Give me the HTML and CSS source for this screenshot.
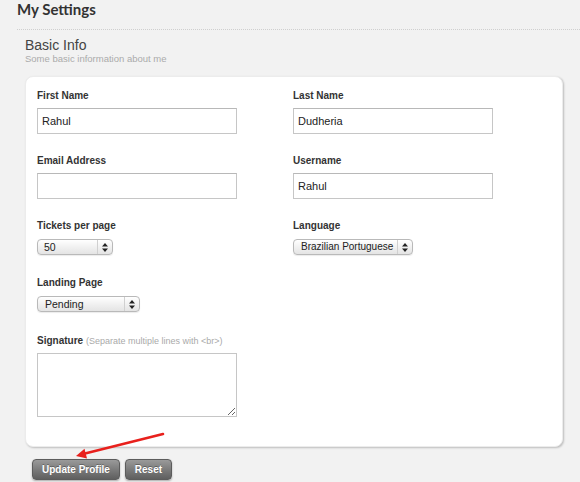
FILE: index.html
```html
<!DOCTYPE html>
<html>
<head>
<meta charset="utf-8">
<link rel="stylesheet" href="styles.css">
</head>
<body>
<div class="page">
  <header class="page-head">
    <h1 class="page-title">My Settings</h1>
  </header>
  <section class="section">
    <h2 class="section-title">Basic Info</h2>
    <p class="section-sub">Some basic information about me</p>
    <div class="card">
      <div class="grid">
        <div class="field">
          <label class="label">First Name</label>
          <input class="input" type="text" value="Rahul">
        </div>
        <div class="field">
          <label class="label">Last Name</label>
          <input class="input" type="text" value="Dudheria">
        </div>
        <div class="field">
          <label class="label">Email Address</label>
          <input class="input" type="text" value="">
        </div>
        <div class="field">
          <label class="label">Username</label>
          <input class="input" type="text" value="Rahul">
        </div>
        <div class="field field-select">
          <label class="label">Tickets per page</label>
          <div class="select select-tickets">
            <span class="select-value">50</span>
            <span class="select-arrows"><svg width="6" height="9" viewBox="0 0 6 9"><path d="M3 0 L6 3.4 H0 Z M3 9 L6 5.6 H0 Z" fill="#222"/></svg></span>
          </div>
        </div>
        <div class="field field-select">
          <label class="label">Language</label>
          <div class="select select-lang">
            <span class="select-value">Brazilian Portuguese</span>
            <span class="select-arrows"><svg width="6" height="9" viewBox="0 0 6 9"><path d="M3 0 L6 3.4 H0 Z M3 9 L6 5.6 H0 Z" fill="#222"/></svg></span>
          </div>
        </div>
        <div class="field field-select full">
          <label class="label">Landing Page</label>
          <div class="select select-landing">
            <span class="select-value">Pending</span>
            <span class="select-arrows"><svg width="6" height="9" viewBox="0 0 6 9"><path d="M3 0 L6 3.4 H0 Z M3 9 L6 5.6 H0 Z" fill="#222"/></svg></span>
          </div>
        </div>
        <div class="field full field-sig">
          <label class="label">Signature <span class="hint">(Separate multiple lines with &lt;br&gt;)</span></label>
          <textarea class="textarea"></textarea>
        </div>
      </div>
    </div>
    <div class="actions">
      <button class="btn">Update Profile</button>
      <button class="btn">Reset</button>
    </div>
  </section>
  <svg class="annotation" width="580" height="482" viewBox="0 0 580 482">
    <line x1="163" y1="434" x2="85" y2="453.5" stroke="#e8201c" stroke-width="2.6" stroke-linecap="round"/>
    <polygon points="76,456 87,458.5 84.5,448.8" fill="#e8201c"/>
  </svg>
</div>
</body>
</html>
```
FILE: styles.css
```css
html, body {
  margin: 0;
  padding: 0;
  background: #f2f2f2;
}
body {
  font-family: "Liberation Sans", Arial, sans-serif;
  color: #333;
}
.page {
  position: relative;
  width: 580px;
  height: 482px;
  overflow: hidden;
}
.page-head {
  margin-left: 17px;
  height: 29px;
  border-bottom: 1px dotted #cfcfcf;
}
.page-title {
  margin: 0;
  font-family: Lato, "Liberation Sans", sans-serif;
  font-weight: 700;
  font-size: 15px;
  line-height: 18px;
  color: #333;
}
.section {
  padding-left: 25px;
}
.section-title {
  margin: 8px 0 0;
  font-weight: normal;
  font-size: 14px;
  line-height: 15px;
  color: #444;
}
.section-sub {
  margin: 0;
  font-size: 9.5px;
  line-height: 12px;
  color: #ababab;
}
.card {
  margin-top: 11px;
  background: #fff;
  border: 1px solid #ececec;
  border-radius: 8px;
  box-shadow: 1px 1px 2px rgba(0,0,0,0.22);
  padding: 13px 0 29px 11px;
  box-sizing: border-box;
  width: 538px;
}
.grid {
  display: grid;
  grid-template-columns: 256px 1fr;
  row-gap: 21px;
}
.field {
  display: flex;
  flex-direction: column;
  align-items: flex-start;
}
.field-select {
  padding-bottom: 1px;
}
.field-sig {
  margin-top: 1px;
}
.full {
  grid-column: 1 / span 2;
}
.label {
  font-weight: bold;
  font-size: 10px;
  line-height: 12px;
  color: #333;
  margin-bottom: 6px;
}
.field-select .label {
  margin-bottom: 7px;
}
.hint {
  font-weight: normal;
  font-size: 9px;
  color: #aaa;
}
.input {
  width: 200px;
  height: 26px;
  box-sizing: border-box;
  margin: 0;
  border: 1px solid #c6c6c6;
  border-top-color: #b8b8b8;
  background: #fff;
  padding: 0 4px;
  font-family: "Liberation Sans", Arial, sans-serif;
  font-size: 11px;
  color: #222;
  outline: none;
}
.select {
  display: flex;
  align-items: center;
  height: 16px;
  box-sizing: border-box;
  border: 1px solid #b9b9b9;
  border-radius: 4px;
  background: linear-gradient(#ffffff, #f1f1f1 50%, #e4e4e4);
  box-shadow: 0 1px 1px rgba(0,0,0,0.08);
}
.select-value {
  flex: 1;
  font-size: 10.5px;
  line-height: 14px;
  color: #222;
  padding-left: 7px;
  white-space: nowrap;
  overflow: hidden;
}
.select-arrows {
  flex: none;
  width: 14px;
  height: 14px;
  display: flex;
  align-items: center;
  justify-content: center;
  border-left: 1px solid #d0d0d0;
}
.select-tickets { width: 76px; }
.select-tickets .select-value { padding-left: 6px; }
.select-lang { width: 120px; }
.select-lang .select-value { font-size: 10px; }
.select-landing { width: 103px; }
.textarea {
  width: 200px;
  height: 64px;
  box-sizing: border-box;
  margin: 0;
  border: 1px solid #c6c6c6;
  background: #fff;
  resize: both;
  outline: none;
}
.actions {
  display: flex;
  gap: 5px;
  margin-top: 12px;
  margin-left: 7px;
}
.btn {
  height: 21px;
  box-sizing: border-box;
  margin: 0;
  padding: 0 9px;
  border: 1px solid #5c5c5c;
  border-radius: 4px;
  background: linear-gradient(#9a9a9a, #7b7b7b 50%, #5f5f5f);
  box-shadow: 0 1px 2px rgba(0,0,0,0.3);
  font-family: "Liberation Sans", Arial, sans-serif;
  font-weight: bold;
  font-size: 10px;
  color: #fff;
  text-shadow: 0 -1px 0 rgba(0,0,0,0.3);
}
.annotation {
  position: absolute;
  left: 0;
  top: 0;
  pointer-events: none;
}
```
